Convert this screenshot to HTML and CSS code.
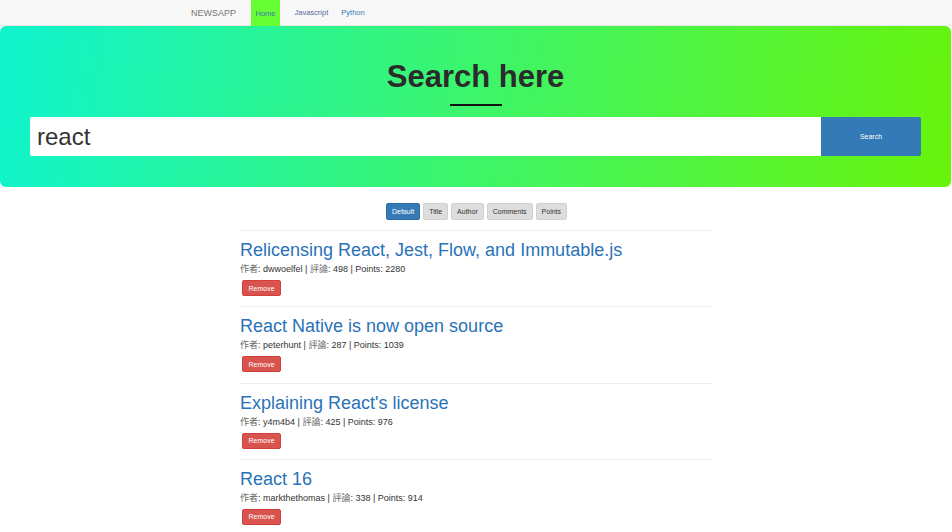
FILE: index.html
```html
<!DOCTYPE html>
<html lang="en">
<head>
<meta charset="utf-8">
<title>NewsApp</title>
<link rel="stylesheet" href="styles.css">
</head>
<body>
<nav class="navbar">
  <div class="nav-inner">
    <span class="brand">NEWSAPP</span>
    <a class="nav-link active" href="#">Home</a>
    <a class="nav-link visited" href="#">Javascript</a>
    <a class="nav-link" href="#">Python</a>
  </div>
</nav>
<header class="hero">
  <h1 class="hero-title">Search here</h1>
  <div class="hero-rule"></div>
  <form class="search">
    <input class="search-input" type="text" value="react">
    <button class="search-btn" type="button">Search</button>
  </form>
</header>
<div class="sorts">
  <button class="sort active">Default</button>
  <button class="sort">Title</button>
  <button class="sort">Author</button>
  <button class="sort">Comments</button>
  <button class="sort">Points</button>
</div>
<main class="list">
  <div class="item">
    <a class="item-title" href="#">Relicensing React, Jest, Flow, and Immutable.js</a>
    <div class="meta"><span class="cjk">作者</span>: dwwoelfel | <span class="cjk">評論</span>: 498 | Points: 2280</div>
    <button class="remove">Remove</button>
  </div>
  <div class="item">
    <a class="item-title" href="#">React Native is now open source</a>
    <div class="meta"><span class="cjk">作者</span>: peterhunt | <span class="cjk">評論</span>: 287 | Points: 1039</div>
    <button class="remove">Remove</button>
  </div>
  <div class="item">
    <a class="item-title" href="#">Explaining React's license</a>
    <div class="meta"><span class="cjk">作者</span>: y4m4b4 | <span class="cjk">評論</span>: 425 | Points: 976</div>
    <button class="remove">Remove</button>
  </div>
  <div class="item">
    <a class="item-title" href="#">React 16</a>
    <div class="meta"><span class="cjk">作者</span>: markthethomas | <span class="cjk">評論</span>: 338 | Points: 914</div>
    <button class="remove">Remove</button>
  </div>
</main>
</body>
</html>
```
FILE: styles.css
```css
* { box-sizing: border-box; }
html, body { margin: 0; padding: 0; background: #fff; }
body {
  font-family: "Liberation Sans", Arial, "Noto Sans CJK TC", sans-serif;
  color: #333;
  overflow: hidden;
}
.navbar {
  height: 26px;
  background: #f8f8f8;
  border-bottom: 1px solid #e7e7e7;
}
.nav-inner {
  display: flex;
  align-items: stretch;
  height: 25px;
  padding-left: 191px;
}
.brand {
  display: flex;
  align-items: center;
  font-size: 9px;
  color: #777;
  margin-right: 15px;
}
.nav-link {
  display: flex;
  align-items: center;
  font-size: 7.5px;
  color: #337ab7;
  text-decoration: none;
  padding: 0 4.5px;
  margin-right: 4px;
}
.nav-link.active {
  background: #66ff33;
  color: #3b7ab0;
  height: 26px;
}
.nav-link.visited { color: #55689b; margin-left: 6px; }
.hero {
  background: linear-gradient(100deg, #0ff4cf 0%, #3df56a 50%, #68f30a 100%);
  border-radius: 6px;
  padding: 34px 30px 31px 30px;
  margin-right: 1px;
  display: flex;
  flex-direction: column;
  align-items: center;
}
.hero-title {
  margin: 0;
  font-size: 31px;
  line-height: 34px;
  font-weight: bold;
  color: #2b2b2b;
}
.hero-rule {
  width: 52px;
  height: 2px;
  background: #111;
  margin-top: 10px;
}
.search {
  display: flex;
  width: 100%;
  margin-top: 11px;
  height: 39px;
}
.search-input {
  flex: 1;
  height: 39px;
  border: none;
  border-radius: 2px 0 0 2px;
  font-family: "Liberation Sans", Arial, sans-serif;
  font-size: 24px;
  color: #333;
  padding: 0 7px;
  outline: none;
}
.search-btn {
  width: 100px;
  height: 39px;
  border: none;
  border-radius: 0 2px 2px 0;
  background: #337ab7;
  color: #fff;
  font-family: "Liberation Sans", Arial, sans-serif;
  font-size: 7px;
  padding: 0;
}
.sorts {
  display: flex;
  justify-content: center;
  gap: 3px;
  margin-top: 16px;
  margin-bottom: 10px;
  padding-left: 1px;
}
.sort {
  height: 17px;
  border: 1px solid #d0d0d0;
  border-radius: 2px;
  background: #ddd;
  color: #333;
  font-family: "Liberation Sans", Arial, sans-serif;
  font-size: 7px;
  padding: 0 5px;
}
.sort.active {
  background: #337ab7;
  border-color: #2e6da4;
  color: #fff;
}
.list {
  width: 472px;
  margin: 0 auto;
}
.item {
  border-top: 1px solid #eee;
  padding: 9px 0 10.33px 0;
  display: flex;
  flex-direction: column;
  align-items: flex-start;
}
.item-title {
  font-size: 18px;
  line-height: 20px;
  color: #2a72b8;
  text-decoration: none;
}
.meta {
  font-size: 9px;
  line-height: 12px;
  margin-top: 3px;
  color: #333;
}
.cjk {
  font-family: "Noto Sans CJK TC", sans-serif;
  color: #666;
}
.remove {
  margin-top: 5px;
  margin-left: 2px;
  width: 39px;
  height: 16px;
  border: 1px solid #d43f3a;
  border-radius: 2px;
  background: #d9534f;
  color: #fff;
  font-family: "Liberation Sans", Arial, sans-serif;
  font-size: 7px;
  padding: 0;
}
```
